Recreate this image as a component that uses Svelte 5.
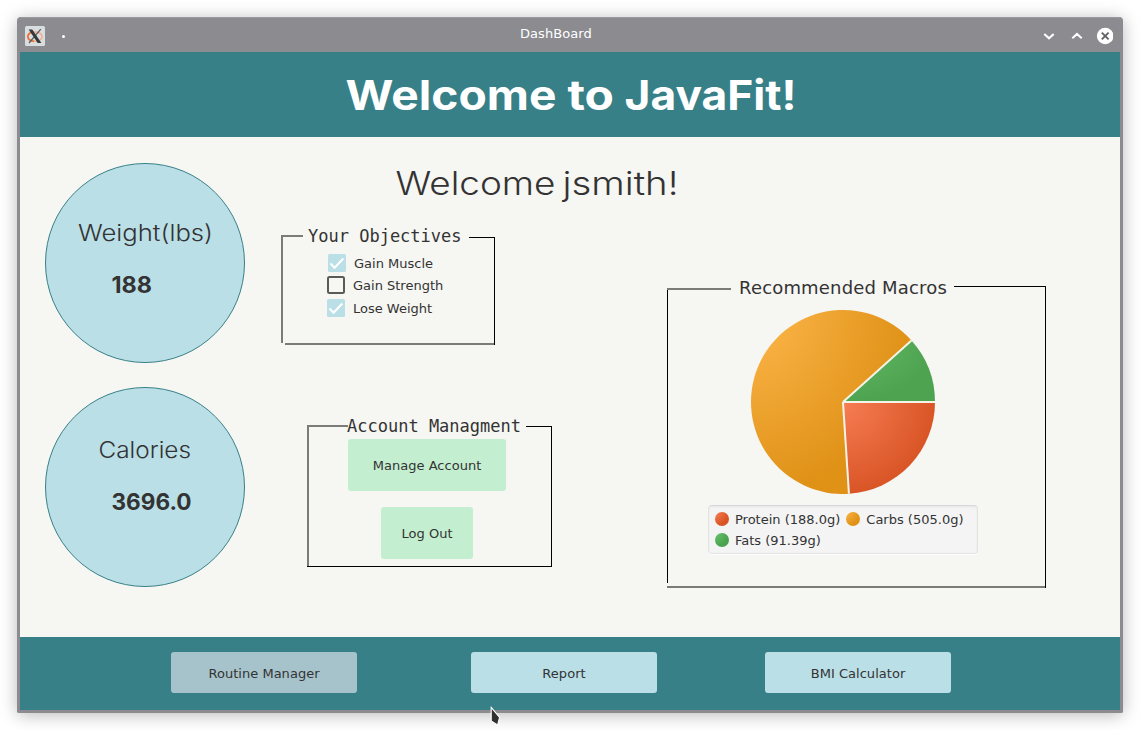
<script>
  const macros = [
    { name: 'Protein', grams: '188.0', id: 'protein' },
    { name: 'Carbs', grams: '505.0', id: 'carbs' },
    { name: 'Fats', grams: '91.39', id: 'fats' }
  ];
  const total = macros.reduce((sum, m) => sum + Number(m.grams), 0);
  const R = 92;
  let angle = 0;
  const slices = macros.map((m) => {
    const start = angle;
    angle += (Number(m.grams) / total) * Math.PI * 2;
    const large = angle - start > Math.PI ? 1 : 0;
    const x1 = R * Math.cos(start), y1 = R * Math.sin(start);
    const x2 = R * Math.cos(angle), y2 = R * Math.sin(angle);
    return { id: m.id, x1, y1, d: `M0 0L${x1} ${y1}A${R} ${R} 0 ${large} 1 ${x2} ${y2}Z` };
  });
  const objectives = [
    { label: 'Gain Muscle', on: true },
    { label: 'Gain Strength', on: false },
    { label: 'Lose Weight', on: true }
  ];
</script>

<div class="window">
  <div class="titlebar">
    <svg class="app-icon" width="20" height="20" viewBox="0 0 20 20">
      <rect width="20" height="20" rx="1.5" fill="#d8dee0" />
      <ellipse cx="10" cy="10.7" rx="7.2" ry="4.7" fill="none" stroke="#f3a987" stroke-width="1.4" />
      <path d="M9 15.2C4.6 15 2.6 12.8 2.9 10.2C3.1 8 4.6 6.7 6.8 6.2" fill="none" stroke="#ec6b28" stroke-width="1.6" />
      <path d="M15.8 3.2L4 17" stroke="#55595b" stroke-width="1.2" />
      <path d="M3.6 3.6H7.3L16.4 17H12.7Z" fill="#33383a" />
    </svg>
    <span class="dot"></span>
    <span class="caption">DashBoard</span>
    <svg class="controls" width="72" height="20" viewBox="0 0 72 20">
      <path d="M3.3 7.9L8 12.3L12.7 7.9M31.3 12.3L36 7.9L40.7 12.3" fill="none" stroke="#fff" stroke-width="2" />
      <circle cx="64.2" cy="10" r="8.3" fill="#fff" />
      <path d="M60.8 6.6L67.6 13.4M67.6 6.6L60.8 13.4" stroke="#626268" stroke-width="1.9" />
    </svg>
  </div>

  <header>
    <svg width="460" height="60" viewBox="0 0 460 60">
      <g font-size="41" font-weight="700" fill="#fff">
        <text x="5.5" y="45" textLength="211" lengthAdjust="spacingAndGlyphs">Welcome</text>
        <text x="227.5" y="45" textLength="46.5" lengthAdjust="spacingAndGlyphs">to</text>
        <text x="284.5" y="45" textLength="172" lengthAdjust="spacingAndGlyphs">JavaFit!</text>
      </g>
    </svg>
  </header>

  <main>
    <div class="stats">
      <svg width="200" height="200" viewBox="0 0 200 200">
        <circle cx="100" cy="100" r="99.5" fill="#badfe7" stroke="#388087" />
        <text x="33" y="78.4" font-size="22.8" font-weight="300" fill="#333" textLength="135" lengthAdjust="spacingAndGlyphs">Weight(lbs)</text>
        <text x="66.5" y="130.3" font-size="22.8" font-weight="700" fill="#333" textLength="40.5" lengthAdjust="spacingAndGlyphs">188</text>
      </svg>
      <svg width="200" height="200" viewBox="0 0 200 200">
        <circle cx="100" cy="100" r="99.5" fill="#badfe7" stroke="#388087" />
        <text x="53.5" y="71.4" font-size="22.8" font-weight="300" fill="#333" textLength="92.5" lengthAdjust="spacingAndGlyphs">Calories</text>
        <text x="66.5" y="123.3" font-size="22.8" font-weight="700" fill="#333" textLength="80" lengthAdjust="spacingAndGlyphs">3696.0</text>
      </svg>
    </div>

    <div class="board">
      <svg class="greeting" width="290" height="45" viewBox="0 0 290 45">
        <g font-size="32.5" font-weight="300" fill="#333">
          <text x="4.5" y="33.3" textLength="160" lengthAdjust="spacingAndGlyphs">Welcome</text>
          <text x="171.5" y="33.3" textLength="116" lengthAdjust="spacingAndGlyphs">jsmith!</text>
        </g>
      </svg>
      <div class="panels">
        <div class="middle">
          <section class="objectives">
            <svg class="frame" width="214" height="110" shape-rendering="crispEdges">
              <path d="M0 0H21.5V2H2V108H0ZM4 108H213V110H4Z" fill="#7b7b79" />
              <path d="M188 2H214V110H213V3H188Z" fill="#000" />
            </svg>
            <div class="inner">
              <h2>Your Objectives</h2>
              {#each objectives as o}
                <div class="option">
                  <svg width="18" height="18" viewBox="0 0 18 18">
                    {#if o.on}
                      <rect width="18" height="18" rx="1.5" fill="#badfe7" />
                      <path d="M2.5 9.5L6.6 13.7L15.3 4.6" fill="none" stroke="#fff" stroke-width="2.1" />
                    {:else}
                      <rect x="1" y="1" width="16" height="16" rx="1.5" fill="none" stroke="#5a5a5a" stroke-width="2" />
                    {/if}
                  </svg>
                  <span>{o.label}</span>
                </div>
              {/each}
            </div>
          </section>
          <section class="account">
            <svg class="frame" width="245" height="142" shape-rendering="crispEdges">
              <path d="M0 0H41V2H2V141H0Z" fill="#7b7b79" />
              <path d="M219 1H245V142H0V141H244V2H219Z" fill="#000" />
            </svg>
            <div class="inner">
              <h2>Account Managment</h2>
              <button class="manage">Manage Account</button>
              <button class="logout">Log Out</button>
            </div>
          </section>
        </div>

        <section class="macros">
          <svg class="frame" width="379" height="302" shape-rendering="crispEdges">
            <path d="M0 2H64V4H0ZM0 300H378V302H0Z" fill="#7d7b7a" />
            <path d="M0 4H1V297H0ZM287 0H379V302H378V1H287Z" fill="#000" />
          </svg>
          <div class="inner">
            <h2>Recommended Macros</h2>
            <svg class="pie" width="184" height="184" viewBox="-92 -92 184 184">
              <defs>
                <radialGradient id="protein" cx="0" cy="0" r="1"><stop stop-color="#f77d54" /><stop offset="1" stop-color="#d95526" /></radialGradient>
                <radialGradient id="carbs" cx="0" cy="0" r="1"><stop stop-color="#fdb74c" /><stop offset="1" stop-color="#e09217" /></radialGradient>
                <radialGradient id="fats" cx="0" cy="0" r="1"><stop stop-color="#66bb68" /><stop offset="1" stop-color="#4da34f" /></radialGradient>
              </defs>
              {#each slices as s}<path d={s.d} fill="url(#{s.id})" />{/each}
              {#each slices as s}<path d="M0 0L{s.x1} {s.y1}" stroke="#f4f4e8" stroke-width="2" />{/each}
            </svg>
            <div class="legend">
              {#each macros as m}
                <div class="key"><i class={m.id}></i><span>{m.name} ({m.grams}g)</span></div>
              {/each}
            </div>
          </div>
        </section>
      </div>
    </div>
  </main>

  <footer>
    <button class="focused">Routine Manager</button>
    <button>Report</button>
    <button class="bmi">BMI Calculator</button>
  </footer>
</div>

<svg class="pointer" width="14" height="22" viewBox="0 0 14 22">
  <path d="M2.2 2.4L10.6 12.4L8.6 20L2.2 15.9Z" fill="#303030" stroke="#fff" stroke-width="1.1" />
</svg>

<style>
  :global(body) { background: #fff; }
  :global(#app) { display: flow-root; height: 730px; overflow: hidden; }
  .window {
    box-sizing: border-box; width: 1106px; height: 696px; margin: 17px 0 0 17px;
    border: 3px solid #8b8b90; border-top: 0; border-radius: 4px 4px 2px 2px; background: #8b8b90;
    box-shadow: 0 2px 17px rgba(0, 0, 0, .28);
    font: 13px/16px "DejaVu Sans", sans-serif; color: #333;
  }
  svg { display: block; flex: none; }
  text { font-family: Inter, sans-serif; }
  .titlebar { display: grid; grid-template-columns: 35px 165px 335px 1fr; height: 35px; color: #fff; box-shadow: inset 0 1px #9a9a9e; border-radius: 3px 3px 0 0; }
  .app-icon { margin: 9px 0 0 5px; }
  .dot { width: 3px; height: 3px; margin: 17.5px 0 0 6.5px; border-radius: 50%; background: #fff; }
  .caption { padding: 9px 0 0 300px; white-space: nowrap; letter-spacing: .06px; }
  .controls { justify-self: end; margin: 9px 7px 0 0; }
  header { height: 85px; background: #388087; padding: 13px 0 0 320px; box-sizing: border-box; }
  main { display: flex; gap: 36px; height: 500px; box-sizing: border-box; padding-left: 25px; background: #f6f6f2; }
  .stats { display: flex; flex-direction: column; gap: 24px; padding-top: 26px; }
  .board { display: flex; flex-direction: column; }
  .greeting { margin: 25px 0 28px 110px; }
  .panels { display: flex; }
  .middle { width: 386px; }
  section { display: grid; }
  .frame, .inner { grid-area: 1 / 1; }
  h2 { margin: 0; font: 17px/20px "DejaVu Sans Mono", monospace; white-space: nowrap; }
  .objectives { width: 214px; height: 110px; }
  .objectives h2 { margin: -9px 0 10px 27px; }
  .option { display: flex; gap: 8px; height: 18px; line-height: 20px; margin: 0 0 4px 46px; }
  .option:nth-of-type(1) { margin-left: 47px; margin-top: -2px; }
  .option:nth-of-type(3) { margin-top: 5px; }
  .account { width: 245px; height: 142px; margin: 80px 0 0 26px; }
  .account .inner { display: flex; flex-direction: column; }
  .account h2 { margin: -9px 0 3px 40px; }
  button { border: 0; padding: 2px 0 0; border-radius: 3px; font: 13px/16px "DejaVu Sans", sans-serif; letter-spacing: .03px; color: #333; }
  .manage, .logout { background: #c3eed0; height: 52px; }
  .manage { width: 158px; margin: 0 0 16px 41px; }
  .logout { width: 92px; margin-left: 74px; }
  .macros { width: 379px; height: 302px; margin-top: 51px; }
  .macros h2 { font: 18px/22px "DejaVu Sans", sans-serif; letter-spacing: .18px; margin: -9px 0 11px 72px; }
  .pie { margin-left: 84px; }
  .legend {
    box-sizing: border-box; display: flex; flex-wrap: wrap; align-content: flex-start; column-gap: 6px; row-gap: 5px;
    width: 270px; height: 49px; margin: 11px 0 0 41px; padding: 5px 5px 0 6px;
    border: 1px solid #e2e3e4; border-top-color: #d7d9da; border-radius: 4px; background: #f4f4f4;
    box-shadow: 0 1px #fff, inset 0 1px 2px #e4e5e6;
  }
  .key { display: flex; align-items: center; gap: 6px; height: 16px; white-space: nowrap; }
  .key span { padding-top: 2px; }
  .key i { width: 14px; height: 14px; border-radius: 50%; }
  .protein { background: radial-gradient(circle at 0 0, #f97f55, #d85323 14px); }
  .carbs { background: radial-gradient(circle at 0 0, #fdb549, #e09116 14px); }
  .fats { background: radial-gradient(circle at 0 0, #6cc36e, #4ba24d 14px); }
  footer { display: flex; gap: 114px; height: 73px; box-sizing: border-box; padding: 15px 0 0 151px; background: #388087; }
  footer button { width: 186px; height: 41px; background: #badfe7; }
  footer .focused { background: #a6c3cb; }
  footer .bmi { margin-left: -6px; }
  .pointer { position: absolute; left: 488.5px; top: 704.7px; }
</style>
